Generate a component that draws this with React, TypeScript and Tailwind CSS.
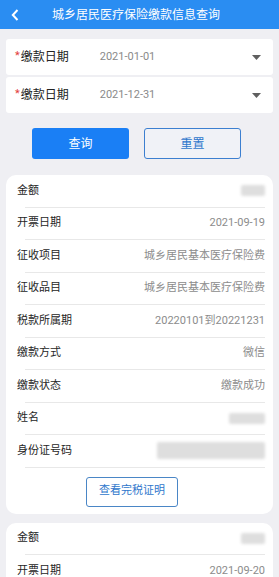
import React from "react";

const FONT = "font-['Roboto','Noto_Sans_CJK_SC',sans-serif]";

function Caret() {
  return (
    <svg width="9" height="5" viewBox="0 0 9 5" className="shrink-0">
      <path d="M0 0h9L4.5 5z" fill="#5f5f5f" />
    </svg>
  );
}

function DateRow({ value }: { value: string }) {
  return (
    <div className="h-[36px] bg-white rounded-[3px] flex items-center pl-[9px] pr-[12px]">
      <span className="text-[#e23b3b] text-[11px] leading-none mr-[1px] -mt-[4px]">*</span>
      <span className="text-[12px] text-[#222] w-[79px]">缴款日期</span>
      <span className="flex-1 text-[11px] text-[#8a8a8a]">{value}</span>
      <Caret />
    </div>
  );
}

function Blur({ w, h = 11 }: { w: number; h?: number }) {
  return (
    <div
      className="rounded-[2px] bg-[#dedede] blur-[1.5px]"
      style={{ width: w, height: h }}
    />
  );
}

type Row = { label: string; value?: string; blur?: number; blurH?: number };

function InfoRow({ r, last }: { r: Row; last?: boolean }) {
  return (
    <div>
      <div className="h-[31.5px] flex items-center justify-between pl-[11px] pr-[8px]">
        <span className="text-[11px] text-[#262626]">{r.label}</span>
        {r.value ? (
          <span className="text-[11px] text-[#8c8c8c]">{r.value}</span>
        ) : (
          <Blur w={r.blur ?? 24} h={r.blurH} />
        )}
      </div>
      {!last && <div className="h-px bg-[#e8e8e8] ml-[19px] mr-[8px]" />}
    </div>
  );
}

const ROWS: Row[] = [
  { label: "金额", blur: 24 },
  { label: "开票日期", value: "2021-09-19" },
  { label: "征收项目", value: "城乡居民基本医疗保险费" },
  { label: "征收品目", value: "城乡居民基本医疗保险费" },
  { label: "税款所属期", value: "20220101到20221231" },
  { label: "缴款方式", value: "微信" },
  { label: "缴款状态", value: "缴款成功" },
  { label: "姓名", blur: 36 },
  { label: "身份证号码", blur: 108, blurH: 17 },
];

export default function App() {
  return (
    <div className={`w-[279px] h-[577px] overflow-hidden bg-[#efeff3] ${FONT}`}>
      {/* header */}
      <div className="h-[29px] bg-[#2a8df2] flex items-center relative">
        <svg width="8" height="12" viewBox="0 0 8 12" className="absolute left-[11px] top-[9px]">
          <path d="M6.5 1L1.8 6l4.7 5" stroke="#fff" strokeWidth="2" fill="none" />
        </svg>
        <div className="pl-[52px] text-white text-[12px]">城乡居民医疗保险缴款信息查询</div>
      </div>

      {/* form */}
      <div className="mx-[6px] mt-[10px] flex flex-col gap-[2px]">
        <DateRow value="2021-01-01" />
        <DateRow value="2021-12-31" />
      </div>

      {/* buttons */}
      <div className="flex gap-[15px] mt-[15px] pl-[32px]">
        <button className="w-[97px] h-[31px] rounded-[3px] bg-[#1a7ff5] text-white text-[12px]">查询</button>
        <button className="w-[97px] h-[31px] rounded-[3px] border border-[#3c7fd0] bg-[#f0f2f7] text-[#2f77cc] text-[12px]">重置</button>
      </div>

      {/* result card */}
      <div className="mx-[6px] mt-[16px] bg-white rounded-[10px] pb-[7px]">
        {ROWS.map((r) => (
          <InfoRow key={r.label} r={r} />
        ))}
        <div className="flex mt-[9px] pl-[80px]">
          <button className="w-[92px] h-[30px] rounded-[3px] border border-[#4a86c6] text-[#2f77cc] text-[11px]">查看完税证明</button>
        </div>
      </div>

      <div className="mx-[6px] mt-[9px] bg-white rounded-[10px]">
        <InfoRow r={{ label: "金额", blur: 24 }} />
        <InfoRow r={{ label: "开票日期", value: "2021-09-20" }} last />
      </div>
    </div>
  );
}
